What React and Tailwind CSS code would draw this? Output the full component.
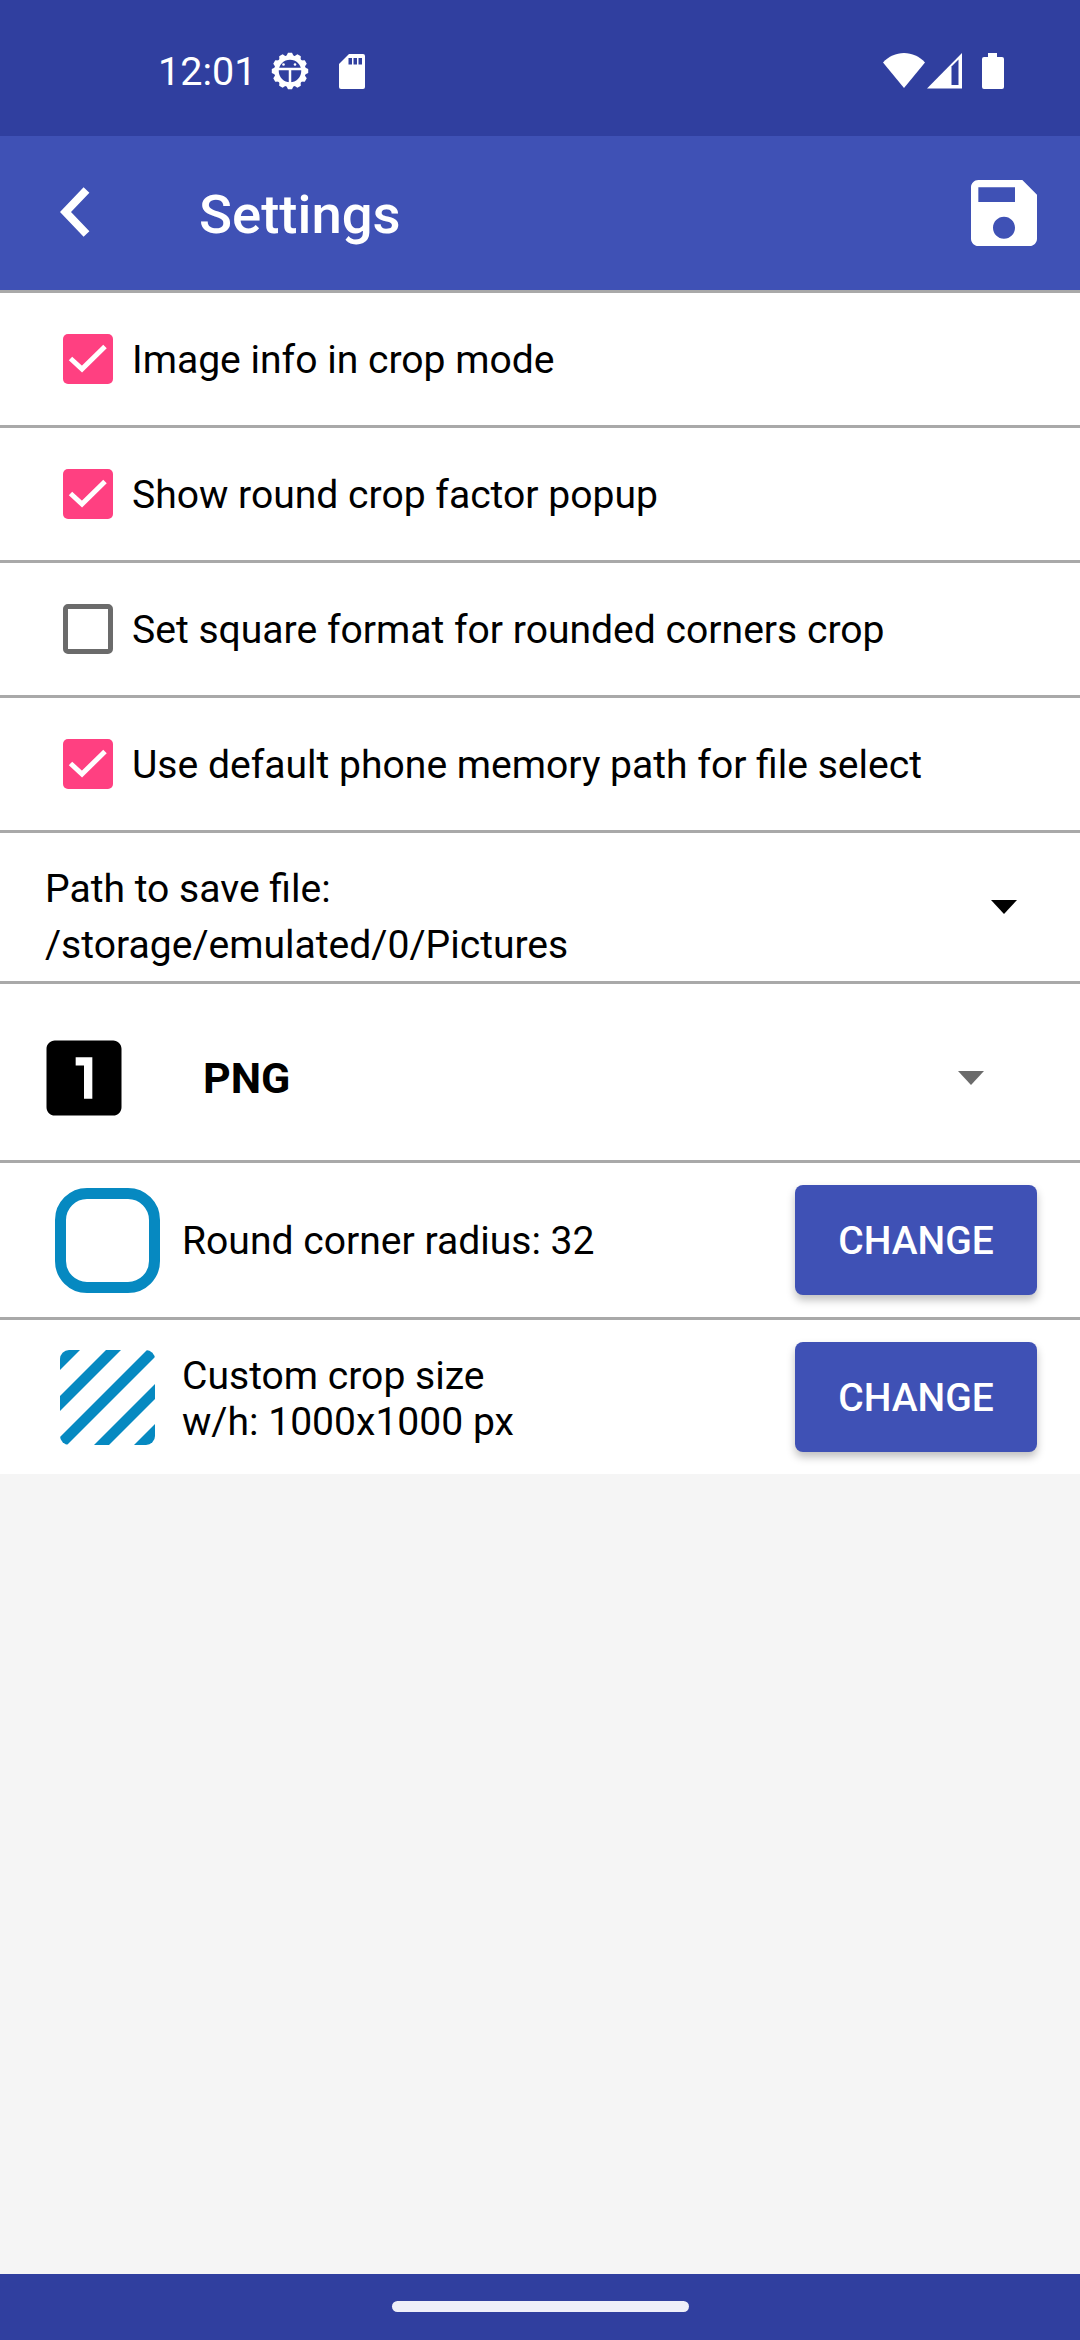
const FONT = "font-['Roboto',sans-serif]";

function GearBot() {
  // gear with a small robot face, status bar notification
  const teeth = Array.from({ length: 12 }, (_, i) => i * 30);
  return (
    <svg width="38" height="38" viewBox="0 0 38 38">
      {teeth.map((deg) => (
        <path key={deg} d="M14.500 6 17 .8h4L23.500 6z" fill="#fff" transform={`rotate(${deg} 19 19)`} />
      ))}
      <circle cx="19" cy="19" r="13.500" fill="none" stroke="#fff" strokeWidth="4.500" />
      <path d="M6 17h26M19 17v15" stroke="#fff" strokeWidth="2.500" />
      <circle cx="12.500" cy="12.500" r="1.300" fill="#fff" />
      <circle cx="24" cy="12.500" r="1.300" fill="#fff" />
    </svg>
  );
}

function SdCard() {
  return (
    <svg width="26" height="35" viewBox="0 0 26 35">
      <path d="M10 0h14a2 2 0 0 1 2 2v31a2 2 0 0 1-2 2H2a2 2 0 0 1-2-2V10z" fill="#fff" />
      <path d="M9.500 4h3.500v6.500H9.500zM14.500 4H18v6.500h-3.500zM19.500 4H23v6.500h-3.500z" fill="#303f9f" />
    </svg>
  );
}

function StatusIcons() {
  return (
    <div className="flex items-start">
      <svg width="42" height="35" viewBox="0 0 42 35">
        <path d="M0 9.500C5.500 3.500 13 0 21 0s15.500 3.500 21 9.500L21 35z" fill="#fff" />
      </svg>
      <svg width="36" height="36" viewBox="0 0 36 36" className="ml-[2px]">
        <path d="M0 35.500 35 0v35.500z" fill="#fff" />
        <path d="M24.500 13.500l7-7V32h-7z" fill="#303f9f" />
      </svg>
      <svg width="22" height="36" viewBox="0 0 22 36" className="ml-[19px]">
        <path d="M6 0h9v4h5a2 2 0 0 1 2 2v28a2 2 0 0 1-2 2H2a2 2 0 0 1-2-2V6a2 2 0 0 1 2-2h4z" fill="#fff" />
      </svg>
    </div>
  );
}

function SettingCheck({ label, checked }) {
  return (
    <div className="flex h-[135px] items-center border-b-[3px] border-[#a9a9a9] pl-[63px]">
      {checked ? (
        <span className="h-[50px] w-[50px] rounded-[5px] bg-[#ff4081]">
          <svg width="50" height="50" viewBox="0 0 50 50">
            <path d="M7.500 24.500 19 35 42 12.500" fill="none" stroke="#fff" strokeWidth="5" />
          </svg>
        </span>
      ) : (
        <span className="h-[50px] w-[50px] rounded-[5px] border-[5px] border-[#6b6b6b]" />
      )}
      <span className="ml-[19px] mt-[3px] text-[39.100px] leading-none text-black">{label}</span>
    </div>
  );
}

function ChangeButton() {
  return (
    <button
      type="button"
      className="ml-auto mr-[43px] h-[110px] w-[242px] rounded-[8px] bg-[#3f51b5] pt-[2px] text-[39px] font-medium text-white shadow-[0_5px_8px_rgba(0,0,0,0.25)]"
    >
      CHANGE
    </button>
  );
}

function Stripes() {
  const bands = [
    [-5, 20],
    [46, 61],
    [87, 102],
    [129, 144],
    [169, 195],
  ];
  return (
    <svg width="95" height="95" viewBox="0 0 95 95">
      <defs>
        <clipPath id="stripeClip">
          <rect width="95" height="95" rx="9" />
        </clipPath>
      </defs>
      <g clipPath="url(#stripeClip)" fill="#0689c1">
        {bands.map(([a, b]) => (
          <polygon key={a} points={`${a},0 ${b},0 ${b - 200},200 ${a - 200},200`} />
        ))}
      </g>
    </svg>
  );
}

export default function App() {
  return (
    <div className={`${FONT} flex h-[2340px] w-[1080px] flex-col bg-[#f5f5f5]`}>
      <div className="flex h-[136px] items-start bg-[#303f9f] pl-[158px] pr-[76px] pt-[52px] text-white">
        <span className="-mt-[1px] text-[39.500px] leading-[41px]">12:01</span>
        <span className="ml-[15px]">
          <GearBot />
        </span>
        <span className="ml-[30px] mt-[2px]">
          <SdCard />
        </span>
        <span className="ml-auto mt-[1px]">
          <StatusIcons />
        </span>
      </div>

      <div className="flex h-[157px] items-center border-b-[3px] border-[#a9a9a9] bg-[#3f51b5] pl-[60px] pr-[32px] text-white">
        <svg width="30" height="50" viewBox="0 0 30 50" className="-mt-[3px]">
          <path d="M26.500 3 5.500 25l21 22" fill="none" stroke="#fff" strokeWidth="8" />
        </svg>
        <span className="ml-[109px] mt-[2px] text-[54.500px] font-medium leading-none">Settings</span>
        <svg width="88" height="88" viewBox="0 0 24 24" className="ml-auto" fill="#fff">
          <path d="M17 3H5c-1.110 0-2 .9-2 2v14c0 1.100.89 2 2 2h14c1.100 0 2-.9 2-2V7l-4-4zm-5 16c-1.660 0-3-1.340-3-3s1.340-3 3-3 3 1.340 3 3-1.340 3-3 3zm3-10H5V5h10v4z" />
        </svg>
      </div>

      <div className="bg-white">
        <SettingCheck checked label="Image info in crop mode" />
        <SettingCheck checked label="Show round crop factor popup" />
        <SettingCheck label="Set square format for rounded corners crop" />
        <SettingCheck checked label="Use default phone memory path for file select" />

        <div className="flex h-[151px] items-center border-b-[3px] border-[#a9a9a9] pl-[45px] pr-[63px]">
          <div className="mt-[20px] text-[39.100px] leading-[56px] text-black">
            <div>Path to save file:</div>
            <div>/storage/emulated/0/Pictures</div>
          </div>
          <span className="ml-auto h-0 w-0 border-x-[13.500px] border-t-[14px] border-x-transparent border-t-black" />
        </div>

        <div className="flex h-[179px] items-center border-b-[3px] border-[#a9a9a9] pl-[34px] pr-[96px] pt-[11px]">
          <svg width="100" height="100" viewBox="0 0 24 24" fill="#000">
            <path d="M19 3H5c-1.100 0-2 .9-2 2v14c0 1.100.9 2 2 2h14c1.100 0 2-.9 2-2V5c0-1.100-.9-2-2-2zm-5 14h-2V9h-2V7h4v10z" />
          </svg>
          <span className="ml-[69px] mt-[2px] text-[43px] font-bold leading-none text-black">PNG</span>
          <span className="ml-auto h-0 w-0 border-x-[13.500px] border-t-[14px] border-x-transparent border-t-[#6b6b6b]" />
        </div>

        <div className="flex h-[157px] items-center border-b-[3px] border-[#a9a9a9] pl-[55px]">
          <span className="h-[105px] w-[105px] rounded-[32px] border-[11px] border-[#0689c1]" />
          <span className="ml-[22px] mt-[3px] text-[39.100px] leading-none text-black">Round corner radius: 32</span>
          <ChangeButton />
        </div>

        <div className="flex h-[154px] items-center pl-[60px]">
          <Stripes />
          <div className="ml-[27px] mt-[3px] text-[39.100px] leading-[46px] text-black">
            <div>Custom crop size</div>
            <div>w/h: 1000x1000 px</div>
          </div>
          <ChangeButton />
        </div>
      </div>

      <div className="flex-1" />

      <div className="flex h-[66px] items-start justify-center bg-[#303f9f] pt-[27px]">
        <div className="h-[11px] w-[297px] rounded-full bg-[#eeeff9]" />
      </div>
    </div>
  );
}
